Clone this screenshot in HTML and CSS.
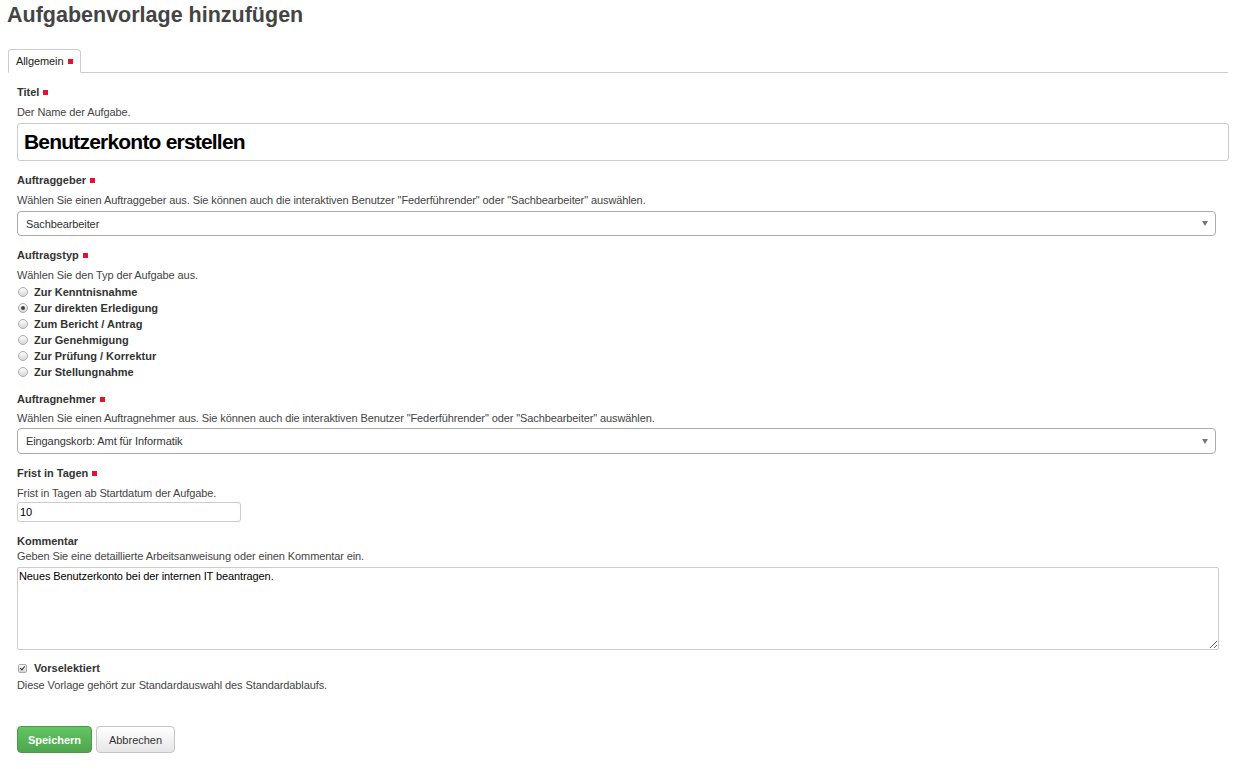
FILE: index.html
```html
<!DOCTYPE html>
<html lang="de">
<head>
<meta charset="utf-8">
<title>Aufgabenvorlage hinzufügen</title>
<link rel="stylesheet" href="styles.css">
</head>
<body>
<div class="page">
  <h1 class="page-title">Aufgabenvorlage hinzufügen</h1>
  <ul class="tabs">
    <li class="tab">Allgemein <span class="req"></span></li>
  </ul>
  <form class="form">
    <div class="field field-first">
      <div class="label">Titel <span class="req"></span></div>
      <div class="desc">Der Name der Aufgabe.</div>
      <input class="input-title" type="text" value="Benutzerkonto erstellen">
    </div>

    <div class="field">
      <div class="label">Auftraggeber <span class="req"></span></div>
      <div class="desc">Wählen Sie einen Auftraggeber aus. Sie können auch die interaktiven Benutzer "Federführender" oder "Sachbearbeiter" auswählen.</div>
      <div class="select"><span>Sachbearbeiter</span><span class="caret"></span></div>
    </div>

    <div class="field">
      <div class="label">Auftragstyp <span class="req"></span></div>
      <div class="desc desc-radios">Wählen Sie den Typ der Aufgabe aus.</div>
      <div class="radios">
        <label class="radio-row"><input type="radio" name="typ" class="radio"><span>Zur Kenntnisnahme</span></label>
        <label class="radio-row"><input type="radio" name="typ" class="radio" checked><span>Zur direkten Erledigung</span></label>
        <label class="radio-row"><input type="radio" name="typ" class="radio"><span>Zum Bericht / Antrag</span></label>
        <label class="radio-row"><input type="radio" name="typ" class="radio"><span>Zur Genehmigung</span></label>
        <label class="radio-row"><input type="radio" name="typ" class="radio"><span>Zur Prüfung / Korrektur</span></label>
        <label class="radio-row"><input type="radio" name="typ" class="radio"><span>Zur Stellungnahme</span></label>
      </div>
    </div>

    <div class="field field-wide">
      <div class="label label-short">Auftragnehmer <span class="req"></span></div>
      <div class="desc desc-select">Wählen Sie einen Auftragnehmer aus. Sie können auch die interaktiven Benutzer "Federführender" oder "Sachbearbeiter" auswählen.</div>
      <div class="select select-tall"><span>Eingangskorb: Amt für Informatik</span><span class="caret"></span></div>
    </div>

    <div class="field">
      <div class="label">Frist in Tagen <span class="req"></span></div>
      <div class="desc desc-tight">Frist in Tagen ab Startdatum der Aufgabe.</div>
      <input class="input-small" type="text" value="10">
    </div>

    <div class="field">
      <div class="label label-tight">Kommentar</div>
      <div class="desc">Geben Sie eine detaillierte Arbeitsanweisung oder einen Kommentar ein.</div>
      <textarea class="textarea">Neues Benutzerkonto bei der internen IT beantragen.</textarea>
    </div>

    <div class="field field-check">
      <label class="check-row"><input type="checkbox" class="checkbox" checked><span>Vorselektiert</span></label>
      <div class="desc">Diese Vorlage gehört zur Standardauswahl des Standardablaufs.</div>
    </div>

    <div class="actions">
      <button type="button" class="btn btn-primary">Speichern</button>
      <button type="button" class="btn btn-default">Abbrechen</button>
    </div>
  </form>
</div>
</body>
</html>
```

FILE: styles.css
```css
* { box-sizing: border-box; }

body {
  margin: 0;
  font-family: "Liberation Sans", Arial, Helvetica, sans-serif;
  font-size: 11px;
  color: #333;
  background: #fff;
}

.page {
  padding: 0 19px 0 7px;
}

.page-title {
  margin: 3px 0 0;
  font-size: 21.5px;
  line-height: 24px;
  font-weight: bold;
  color: #444;
}

.tabs {
  list-style: none;
  margin: 22px 0 0 1px;
  padding: 0;
  display: flex;
  border-bottom: 1px solid #ccc;
}

.tab {
  height: 24px;
  margin-bottom: -1px;
  padding: 0 7px 0 7px;
  border: 1px solid #ccc;
  border-bottom: 1px solid #fff;
  border-radius: 4px 4px 0 0;
  background: #fff;
  display: flex;
  align-items: center;
  gap: 4px;
  font-size: 11px;
  letter-spacing: -0.1px;
  color: #222;
}

.req {
  display: inline-block;
  width: 5px;
  height: 5px;
  background: #e8112d;
  vertical-align: middle;
  margin-left: 1px;
}

.form {
  padding: 12px 0 0 10px;
}

.field {
  margin-bottom: 12px;
}

.field-first {
  margin-bottom: 0;
}

.field-wide {
  margin-bottom: 12px;
}

.label {
  font-weight: bold;
  line-height: 14px;
  margin-bottom: 6px;
  color: #333;
}

.label .req {
  position: relative;
  top: -1px;
}

.label-short {
  margin-bottom: 5px;
}

.label-tight {
  margin-bottom: 1px;
}

.desc {
  line-height: 14px;
  margin-bottom: 4px;
  color: #444;
  letter-spacing: -0.1px;
}

.desc-radios {
  margin-bottom: 2px;
}

.desc-select {
  margin-bottom: 3px;
}

.desc-tight {
  margin-bottom: 2px;
}

.input-title {
  display: block;
  width: 1212px;
  height: 38px;
  border: 1px solid #ccc;
  border-radius: 3px;
  padding: 0 6px;
  font-family: "Liberation Sans", Arial, sans-serif;
  font-size: 21px;
  font-weight: bold;
  letter-spacing: -0.8px;
  color: #000;
  background: #fff;
  margin-bottom: 12px;
}

.select {
  width: 1199px;
  height: 25px;
  border: 1px solid #aaa;
  border-radius: 4px;
  background: #fff;
  display: flex;
  align-items: center;
  justify-content: space-between;
  padding: 0 7px 0 8px;
  color: #333;
  letter-spacing: -0.1px;
}

.select-tall {
  height: 26px;
}

.caret {
  width: 0;
  height: 0;
  border-left: 3.5px solid transparent;
  border-right: 3.5px solid transparent;
  border-top: 5px solid #777;
}

.radios {
  display: flex;
  flex-direction: column;
}

.radio-row, .check-row {
  display: flex;
  align-items: center;
  height: 16px;
  font-weight: bold;
  color: #333;
}

.radio {
  appearance: none;
  -webkit-appearance: none;
  width: 10px;
  height: 10px;
  margin: 0 6px 0 1px;
  border: 1px solid #aaa;
  border-radius: 50%;
  background: linear-gradient(#fdfdfd, #d8d8d8);
  position: relative;
  flex: none;
}

.radio:checked::after {
  content: "";
  position: absolute;
  left: 2px;
  top: 2px;
  width: 4px;
  height: 4px;
  border-radius: 50%;
  background: #444;
}

.input-small {
  display: block;
  width: 224px;
  height: 20px;
  border: 1px solid #ccc;
  border-radius: 3px;
  padding: 0 2px;
  font-family: "Liberation Sans", Arial, sans-serif;
  font-size: 11px;
  color: #000;
  margin-bottom: 1px;
}

.textarea {
  display: block;
  width: 1202px;
  height: 83px;
  border: 1px solid #ccc;
  border-radius: 2px;
  padding: 1px 1px;
  font-family: "Liberation Sans", Arial, sans-serif;
  font-size: 11px;
  line-height: 14px;
  letter-spacing: -0.1px;
  color: #000;
  resize: vertical;
  margin-bottom: -1px;
}

.field-check {
  margin-bottom: 0;
}

.check-row {
  height: 14px;
  margin-bottom: 3px;
}

.checkbox {
  appearance: none;
  -webkit-appearance: none;
  width: 9px;
  height: 9px;
  margin: 0 7px 0 1px;
  border: 1px solid #aaa;
  border-radius: 2px;
  background: linear-gradient(#fafafa, #d8d8d8);
  position: relative;
  flex: none;
}

.checkbox:checked::after {
  content: "";
  position: absolute;
  left: 2px;
  top: 0px;
  width: 2px;
  height: 4px;
  border-right: 1.5px solid #333;
  border-bottom: 1.5px solid #333;
  transform: rotate(40deg);
}

.actions {
  display: flex;
  gap: 4px;
  margin-top: 34px;
}

.btn {
  height: 27px;
  border-radius: 4px;
  font-family: "Liberation Sans", Arial, sans-serif;
  font-size: 11px;
  cursor: pointer;
}

.btn-primary {
  width: 75px;
  border: 1px solid #4a9a4a;
  background: linear-gradient(#62c462, #4ea64e);
  color: #fff;
  font-weight: bold;
}

.btn-default {
  width: 79px;
  border: 1px solid #c5c5c5;
  background: linear-gradient(#ffffff, #e6e6e6);
  color: #333;
}
```
